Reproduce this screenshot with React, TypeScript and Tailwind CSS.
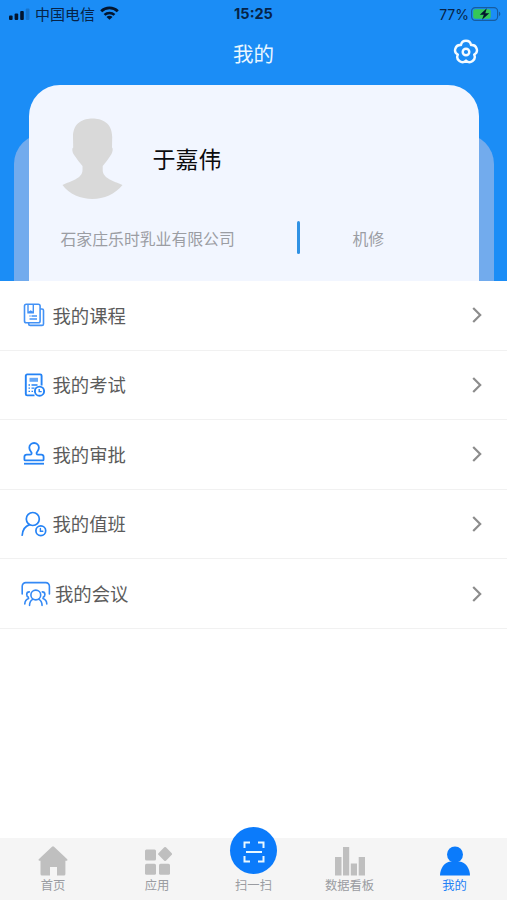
import type { ReactNode } from "react";

const CourseIcon = () => (
  <svg width="22" height="24" viewBox="0 0 22 24" fill="none" stroke="#4392f6" strokeWidth="1.600">
    <rect x="1.500" y="1.200" width="15.600" height="18.600" rx="1.800" />
    <path d="M5 1.200v8.600h5.300V1.200M5.500 9.500l2.200-1.500 2.200 1.500" strokeWidth="1.400" />
    <path d="M6.500 13h1M8.500 13h5.500M6.500 16h7.500" strokeWidth="1.300" />
    <path d="M17 6h2a1.500 1.500 0 0 1 1.500 1.500v13.400a1.500 1.500 0 0 1-1.500 1.500H7.200a1.500 1.500 0 0 1-1.500-1.500V20" />
  </svg>
);

const ExamIcon = () => (
  <svg width="22" height="24" viewBox="0 0 22 24" fill="none" stroke="#2583f5" strokeWidth="1.900">
    <path d="M11.500 22.400H4.200a1.400 1.400 0 0 1-1.400-1.400V2.800a1.400 1.400 0 0 1 1.400-1.400h13a1.400 1.400 0 0 1 1.400 1.400v9.700" />
    <path d="M6.500 6.800h8.500" strokeWidth="4" opacity="0.700" />
    <path d="M5.500 12h1.500M8.500 12h6M5.500 15.200h1.500M8.500 15.200h3M5.500 18.400h1.500M8.500 18.400h1.500" strokeWidth="1.300" />
    <circle cx="16.500" cy="18.200" r="4.600" />
    <path d="M16.200 16v2.600h2.500" strokeWidth="1.400" />
  </svg>
);

const ApprovalIcon = () => (
  <svg width="22" height="24" viewBox="0 0 22 24" fill="none" stroke="#2583f5" strokeWidth="1.800" strokeLinejoin="round">
    <path d="M2.400 18.400h17.200a1 1 0 0 0 1-1v-2.600a2.200 2.200 0 0 0-2.200-2.200h-3.100c-1.800 0-2.200-1.200-1.300-2.500.9-1.200 1.900-2.300 1.900-4.300a4.800 4.800 0 0 0-9.600 0c0 2 1 3.100 1.900 4.300.9 1.300.5 2.500-1.300 2.500H3.600a2.200 2.200 0 0 0-2.200 2.200v2.600a1 1 0 0 0 1 1z" />
    <path d="M1 21.700h20" />
  </svg>
);

const DutyIcon = () => (
  <svg width="26" height="26" viewBox="0 0 26 26" fill="none" stroke="#2583f5" strokeWidth="1.700" strokeLinecap="round">
    <circle cx="11.800" cy="8" r="6.500" />
    <path d="M8.600 13.600C4.500 15 1.600 18.800 1.200 24.200" />
    <circle cx="19.800" cy="19.800" r="4.900" />
    <path d="M19.400 17.500v2.700h2.400" strokeWidth="1.400" />
  </svg>
);

const MeetingIcon = () => (
  <svg width="30" height="26" viewBox="0 0 30 26" fill="none" stroke="#3489f5" strokeWidth="1.600" strokeLinecap="round">
    <path d="M1.200 13V5.200a3.600 3.600 0 0 1 3.600-3.600h20a3.600 3.600 0 0 1 3.600 3.600V13" />
    <circle cx="14.800" cy="14" r="4.900" />
    <path d="M11.800 18.400c-1.900 1-3.200 3.300-3.300 6M17.800 18.400c1.900 1 3.200 3.300 3.300 6" />
    <path d="M8.300 10.900c-1.700 0-2.600 1.200-2.600 2.600 0 1.300.7 2.300 1.700 2.800M7.600 17.500c-2.300.8-3.700 2.800-3.800 5.500" />
    <path d="M21.300 10.900c1.700 0 2.600 1.200 2.600 2.600 0 1.300-.7 2.300-1.700 2.800M22 17.500c2.300.8 3.700 2.800 3.800 5.500" />
  </svg>
);

const menu = [
  { label: "我的课程", icon: <CourseIcon /> },
  { label: "我的考试", icon: <ExamIcon /> },
  { label: "我的审批", icon: <ApprovalIcon /> },
  { label: "我的值班", icon: <DutyIcon /> },
  { label: "我的会议", icon: <MeetingIcon />, wide: true },
];

const StatusBar = () => (
  <div className="grid h-7 grid-cols-3 items-center text-[#062347]">
    <div className="flex items-center pl-[9px]">
      <svg width="21" height="12" viewBox="0 0 21 12" fill="#03152e">
        <rect x="0" y="7.500" width="3.600" height="4.500" rx="1" />
        <rect x="5.600" y="5.500" width="3.600" height="6.500" rx="1" />
        <rect x="11.200" y="3" width="3.600" height="9" rx="1" />
        <rect x="16.800" y="0.500" width="3.600" height="11.500" rx="1" opacity="0.200" />
      </svg>
      <span className="ml-[5px] text-[15px] leading-7">中国电信</span>
      <svg className="mb-[2px] ml-[5px]" width="19" height="14" viewBox="0 0 19 14" fill="none" stroke="#03152e">
        <path d="M1.200 5.200a12 12 0 0 1 16.600 0" strokeWidth="2.800" />
        <path d="M4.500 8.900a7.200 7.200 0 0 1 10 0" strokeWidth="2.500" />
        <path d="M9.500 13.800 6.500 11a4.200 4.200 0 0 1 6 0z" fill="#03152e" stroke="none" />
      </svg>
    </div>
    <span className="text-center font-[Inter] text-[14.500px] font-bold">15:25</span>
    <div className="flex items-center justify-end pr-[6px]">
      <span className="font-[Inter] text-[14px]">77%</span>
      <svg className="mb-px ml-[2px]" width="30" height="14" viewBox="0 0 30 14">
        <rect x="0.600" y="0.600" width="26" height="12.800" rx="3.600" fill="none" stroke="#175c9f" strokeWidth="1.200" />
        <rect x="2.200" y="2.200" width="17.500" height="9.600" rx="2" fill="#35c759" />
        <path d="M28 4.800v4.400c1.800-.6 1.800-3.800 0-4.400z" fill="#175c9f" />
        <path d="M15.800 1.300 8.800 7.700h4l-1.800 5 7.300-6.500h-4z" fill="#03152e" />
      </svg>
    </div>
  </div>
);

const ProfileCard = () => (
  <div className="relative mr-[13px] ml-[14px] mt-[6px] h-[196px] pr-[15px] pl-[14.500px]">
    <div className="absolute inset-x-0 top-[49px] bottom-0 rounded-t-[30px] bg-[#72abed]" />
    <div className="relative h-full rounded-t-[31px] bg-[#f2f6ff] px-8 pt-[33px]">
      <div className="flex h-[82px] items-center">
        <svg width="63" height="82" viewBox="0 0 63 82" fill="#d9d9d9">
          <path d="M31.500 .5C40 .5 51.200 4 51.200 19L51 29.500c1.200.7.8 4.500-.8 7-2.500 4-6 8.500-8.500 11.500v4c0 8.500 11 11 19.800 15C54 76 43 81 31.500 81S8 76 1.500 67C10 63 21.500 60.500 21.500 52v-4c-2.500-3-6-7.500-8.700-11.500-1.600-2.500-2-6.300-.6-7L12 19C12 4 23 .5 31.500 .5z" />
        </svg>
        <span className="mb-[2px] ml-[29px] text-[23px] text-[#0b0b0d]">于嘉伟</span>
      </div>
      <div className="mt-[19px] flex h-[36px] items-center text-[15.850px] text-[#9b9da3]">
        <span className="mt-[3px] w-[236px]">石家庄乐时乳业有限公司</span>
        <span className="h-[33px] w-[3px] rounded-full bg-[#3092e4]" />
        <span className="mt-[3px] ml-[53px]">机修</span>
      </div>
    </div>
  </div>
);

const Tab = ({ label, active, children }: { label: string; active?: boolean; children: ReactNode }) => (
  <div className="flex flex-col items-center">
    <div className="flex h-[31px] items-end">{children}</div>
    <span className={active ? "mt-px text-[12.300px] leading-[16px] text-[#2280f5]" : "mt-px text-[12.300px] leading-[16px] text-[#9a9ca1]"}>
      {label}
    </span>
  </div>
);

const TabBar = () => (
  <nav className="grid h-[62px] grid-cols-[106px_102px_91px_101px_107px] bg-[#f5f5f5] pt-[7px]">
    <Tab label="首页">
      <svg width="30" height="30" viewBox="0 0 30 30" fill="#bfbfbf">
        <path d="M14 .8a1.500 1.500 0 0 1 2 0L29 13c.9.900.5 1.800-.6 1.800h-1V28a1.500 1.500 0 0 1-1.500 1.500H19V21h-7v8.500H4A1.500 1.500 0 0 1 2.500 28V14.800h-1C.500 14.800.1 13.900 1 13z" />
      </svg>
    </Tab>
    <Tab label="应用">
      <svg width="29" height="30" viewBox="0 0 29 30" fill="#bfbfbf">
        <rect x="2" y="3.500" width="11" height="11" rx="1.500" />
        <rect x="2" y="17.700" width="11" height="11" rx="1.500" />
        <rect x="16" y="17.700" width="11" height="11" rx="1.500" />
        <rect x="16.800" y="2.700" width="10.600" height="10.600" rx="1.200" transform="rotate(45 22.100 8)" />
      </svg>
    </Tab>
    <Tab label="扫一扫">
      <div className="mb-[2px] flex size-[47px] shrink-0 items-center justify-center rounded-full bg-[#0b7bfb]">
        <svg className="mt-[2px]" width="22" height="22" viewBox="0 0 22 22" fill="none" stroke="#e9f8ff" strokeWidth="2">
          <path d="M1.500 7V1.500H7M15 1.500h5.500V7M20.500 15v5.500H15M7 20.500H1.500V15M3 11h16" />
        </svg>
      </div>
    </Tab>
    <Tab label="数据看板">
      <svg width="30" height="30" viewBox="0 0 30 30" fill="#bfbfbf">
        <path d="M0 11h6.500v18.500H0zM8 1h6.200v28.500H8zM15.800 17.500H22v12h-6.200zM23.700 11H30v18.500h-6.300z" />
      </svg>
    </Tab>
    <div className="pl-[2px]">
      <Tab label="我的" active>
        <svg width="30" height="30" viewBox="0 0 30 30" fill="#0b7bfb">
          <circle cx="15" cy="8.500" r="8" />
          <path d="M0 29.500C0 22.500 4.500 16 10.500 15.500h9C25.500 16 30 22.500 30 29.500z" />
        </svg>
      </Tab>
    </div>
  </nav>
);

const App = () => {
  return (
    <div className="flex h-[900px] w-[507px] flex-col overflow-hidden bg-white font-['Noto_Sans_CJK_SC',sans-serif]">
      <header className="h-[281px] shrink-0 bg-[#1b8df6]">
        <StatusBar />
        <div className="grid h-[51px] grid-cols-3 items-center">
          <h1 className="col-start-2 text-center text-[20.500px] text-[#eaf7ff]">我的</h1>
          <svg className="mr-[28px] mb-[3px] justify-self-end" width="26" height="26" viewBox="0 0 26 26" fill="none" stroke="#f4fbff" strokeWidth="2.400" strokeLinejoin="round">
            <path d="M7.950 6.050C9 .4 17 .4 18.050 6.050C23.750 5.300 26.200 12.900 21.200 15.650C23.640 20.840 17.170 25.550 13 21.600C8.830 25.550 2.360 20.840 4.800 15.650C-.2 12.900 2.250 5.300 7.950 6.050Z" />
            <circle cx="13" cy="13" r="3.300" />
          </svg>
        </div>
        <ProfileCard />
      </header>

      <main className="flex-1">
        {menu.map((item) => (
          <div key={item.label} className="flex h-[69.600px] items-center border-b border-[#f1f1f1] pr-[25px] pl-[21px]">
            <span className={item.wide ? "w-[34px] shrink-0" : "flex w-[31.500px] shrink-0 items-center pl-[1.500px] has-[svg[width='26']]:pl-0"}>
              {item.icon}
            </span>
            <span className="text-[18.350px] text-[#5b5b5b]">{item.label}</span>
            <svg className="ml-auto" width="10" height="18" viewBox="0 0 10 18" fill="none" stroke="#8c8c8c" strokeWidth="2.200">
              <path d="m1.200 2 7 7-7 7" />
            </svg>
          </div>
        ))}
      </main>

      <TabBar />
    </div>
  );
};

export default App;
